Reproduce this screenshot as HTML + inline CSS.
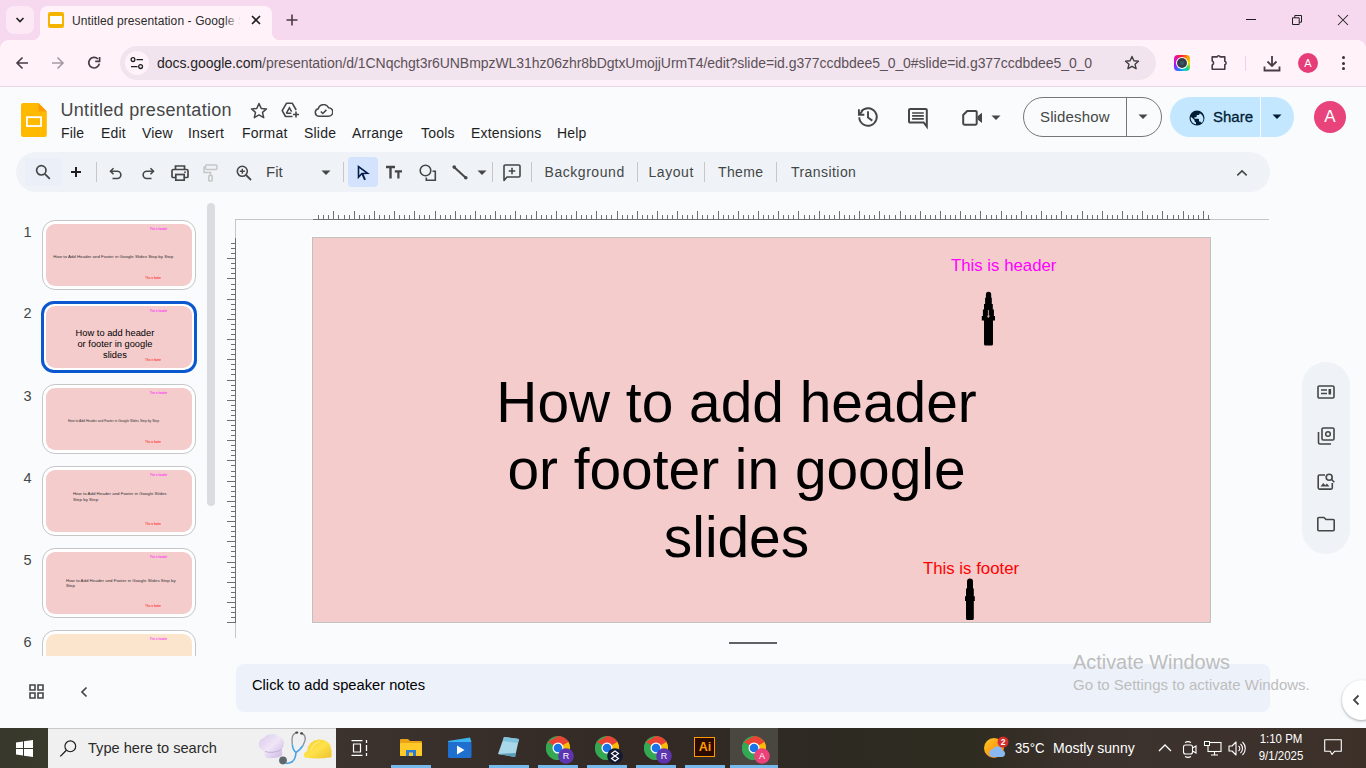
<!DOCTYPE html>
<html><head><meta charset="utf-8">
<style>
*{margin:0;padding:0;box-sizing:border-box}
html,body{width:1366px;height:768px;overflow:hidden;background:#F9FBFD;font-family:"Liberation Sans",sans-serif;position:relative}
.a{position:absolute}
#tabstrip{left:0;top:0;width:1366px;height:40px;background:#F7D9EF}
#toolbar{left:0;top:40px;width:1366px;height:46px;background:#FFF3F9}
#tbline{left:0;top:86px;width:1366px;height:1px;background:#EBD6E2}
#docs{left:0;top:87px;width:1366px;height:641px;background:#F9FBFD}
#taskbar{left:0;top:728px;width:1366px;height:40px;background:linear-gradient(90deg,#37372B 0px,#3A3A2C 48px,#3B322D 370px,#342A25 620px,#2D2A22 850px,#2E2B20 960px,#3A312C 1080px,#3C322E 1140px,#3D3029 1366px)}
svg{display:block}
</style></head><body>
<!-- Chrome tab strip -->
<div id="tabstrip" class="a"></div>
<div class="a" style="left:6px;top:6px;width:28px;height:28px;border-radius:8px;background:#FCE9F5"></div>
<svg class="a" style="left:15px;top:16px" width="10" height="8" viewBox="0 0 10 8"><path d="M1.5 2 L5 5.5 L8.5 2" stroke="#1F1F1F" stroke-width="1.6" fill="none"/></svg>
<div class="a" style="left:40px;top:6px;width:232px;height:40px;background:#FFF3F9;border-radius:8px 8px 0 0"></div>
<div class="a" style="left:32px;top:32px;width:8px;height:8px;background:radial-gradient(circle at 0 0,#F7D9EF 8px,#FFF3F9 8.5px)"></div>
<div class="a" style="left:272px;top:32px;width:8px;height:8px;background:radial-gradient(circle at 100% 0,#F7D9EF 8px,#FFF3F9 8.5px)"></div>
<!-- favicon -->
<div class="a" style="left:48px;top:12px;width:16px;height:16px;background:#F4B400;border-radius:2px"></div>
<div class="a" style="left:50px;top:16px;width:12px;height:8px;background:#fff"></div>
<div class="a" style="left:72px;top:13px;font-size:12px;line-height:16px;color:#2A2A2A;white-space:nowrap;width:172px;overflow:hidden;letter-spacing:0.1px">Untitled presentation - Google Slides</div>
<div class="a" style="left:224px;top:10px;width:22px;height:22px;background:linear-gradient(90deg,rgba(255,243,249,0),#FFF3F9 75%)"></div>
<svg class="a" style="left:251px;top:15px" width="10" height="10" viewBox="0 0 10 10"><path d="M1 1L9 9M9 1L1 9" stroke="#1F1F1F" stroke-width="1.6"/></svg>
<svg class="a" style="left:286px;top:14px" width="12" height="12" viewBox="0 0 12 12"><path d="M6 0.5V11.5M0.5 6H11.5" stroke="#4A3A45" stroke-width="1.6"/></svg>
<!-- window controls -->
<div class="a" style="left:1246px;top:19px;width:10px;height:1px;background:#1F1F1F"></div>
<svg class="a" style="left:1291px;top:14px" width="12" height="12" viewBox="0 0 12 12"><path d="M1.5 3.8h6.7v6.7H1.5z M3.8 3.8V1.5h6.7v6.7H8.2" stroke="#1F1F1F" stroke-width="1" fill="none"/></svg>
<svg class="a" style="left:1337px;top:14px" width="12" height="12" viewBox="0 0 12 12"><path d="M1 1L11 11M11 1L1 11" stroke="#1F1F1F" stroke-width="1.05"/></svg>

<!-- toolbar -->
<div id="toolbar" class="a"></div>
<div id="tbline" class="a"></div>
<div class="a" style="left:1358px;top:40px;width:8px;height:8px;background:radial-gradient(circle at 0 100%,#FFF3F9 7.5px,#F7D9EF 8px)"></div>
<div class="a" style="left:0;top:40px;width:8px;height:8px;background:radial-gradient(circle at 100% 100%,#FFF3F9 7.5px,#F7D9EF 8px)"></div>
<!-- nav -->
<svg class="a" style="left:15px;top:56px" width="14" height="14" viewBox="0 0 14 14"><path d="M13 7H2M7.5 1.5L2 7l5.5 5.5" stroke="#4A3A45" stroke-width="1.6" fill="none"/></svg>
<svg class="a" style="left:51px;top:56px" width="14" height="14" viewBox="0 0 14 14"><path d="M1 7H12M6.5 1.5L12 7l-5.5 5.5" stroke="#A898A3" stroke-width="1.6" fill="none"/></svg>
<svg class="a" style="left:86px;top:54px" width="16" height="16" viewBox="0 0 16 16"><path d="M13.3 9.6A5.3 5.3 0 1 1 11.9 5" stroke="#4A3A45" stroke-width="1.7" fill="none"/><path d="M9.2 7.4H13.6V3" stroke="#4A3A45" stroke-width="1.7" fill="none"/></svg>
<div class="a" style="left:120px;top:46px;width:1036px;height:34px;border-radius:17px;background:#F2E4EE"></div>
<div class="a" style="left:125px;top:51px;width:24px;height:24px;border-radius:12px;background:#FFF3F9"></div>
<svg class="a" style="left:130px;top:57px" width="14" height="13" viewBox="0 0 14 13"><circle cx="3" cy="2.6" r="1.9" stroke="#1F1F1F" stroke-width="1.3" fill="none"/><path d="M6.5 2.6H13M1 9.6H7.5" stroke="#1F1F1F" stroke-width="1.4"/><circle cx="10.6" cy="9.6" r="1.9" stroke="#1F1F1F" stroke-width="1.3" fill="none"/></svg>
<div class="a" style="left:157px;top:54px;font-size:14px;line-height:18px;color:#5B5158;white-space:nowrap;letter-spacing:-0.05px"><span style="color:#1F1F1F">docs.google.com</span>/presentation/d/1CNqchgt3r6UNBmpzWL31hz06zhr8bDgtxUmojjUrmT4/edit?slide=id.g377ccdbdee5_0_0#slide=id.g377ccdbdee5_0_0</div>
<svg class="a" style="left:1124px;top:55px" width="16" height="16" viewBox="0 0 16 16"><path d="M8 1.5l1.9 4.3 4.6.4-3.5 3 1.1 4.5L8 11.3l-4.1 2.4 1.1-4.5-3.5-3 4.6-.4z" stroke="#3F3F3F" stroke-width="1.4" fill="none" stroke-linejoin="round"/></svg>
<div class="a" style="left:1174px;top:55px;width:16px;height:16px;border-radius:4px;background:conic-gradient(from 0deg,#FF2020,#FF9900 45deg,#E8E000 90deg,#20D080 135deg,#10D0D0 160deg,#2080FF 200deg,#9020FF 250deg,#E010C0 300deg,#FF2020 360deg)"></div>
<div class="a" style="left:1176.2px;top:57.2px;width:11.6px;height:11.6px;border-radius:6px;background:#fff"></div>
<div class="a" style="left:1177.3px;top:58.3px;width:9.4px;height:9.4px;border-radius:5px;background:#353E48"></div>
<div class="a" style="left:1179.8px;top:60.8px;width:4.4px;height:4.4px;border-radius:3px;background:#3F5868"></div>
<svg class="a" style="left:1209px;top:52px" width="20" height="20" viewBox="0 0 20 20"><path d="M3.2 4.9H8A1.7 1.7 0 0 1 11.2 4.9H15.8V9.2A1.9 1.9 0 0 1 15.8 12.8V17.2H3.2V12.9A2 2 0 0 0 3.2 9.1Z" stroke="#4A3A45" stroke-width="1.6" fill="none" stroke-linejoin="round"/></svg>
<div class="a" style="left:1244.5px;top:56px;width:1.5px;height:15px;background:#F5CDEA"></div>
<svg class="a" style="left:1263px;top:55px" width="18" height="17" viewBox="0 0 18 17"><path d="M9 1V11M4.5 6.5L9 11l4.5-4.5M1.5 11.5v4h15v-4" stroke="#4A3A45" stroke-width="1.8" fill="none"/></svg>
<div class="a" style="left:1298px;top:53px;width:20px;height:20px;border-radius:10px;background:#E63C78;color:#fff;font-size:11px;line-height:20px;text-align:center">A</div>
<div class="a" style="left:1342px;top:56px;width:3.2px;height:3.2px;border-radius:2px;background:#3D2E38"></div>
<div class="a" style="left:1342px;top:61.5px;width:3.2px;height:3.2px;border-radius:2px;background:#3D2E38"></div>
<div class="a" style="left:1342px;top:67px;width:3.2px;height:3.2px;border-radius:2px;background:#3D2E38"></div>


<!-- Docs header -->
<svg class="a" style="left:21px;top:103px" width="26" height="34" viewBox="0 0 26 34"><path d="M2.3 0H17.5L25.8 8.5V31.7A2.3 2.3 0 0 1 23.5 34H2.3A2.3 2.3 0 0 1 0 31.7V2.3A2.3 2.3 0 0 1 2.3 0z" fill="#FFBA00"/><path d="M17.5 0L25.8 8.5H17.5z" fill="#FF9A00"/><rect x="5.9" y="14.2" width="14.1" height="8.8" fill="none" stroke="#fff" stroke-width="1.8"/></svg>
<div class="a" style="left:60.5px;top:99px;font-size:18px;line-height:22px;color:#474747;white-space:nowrap;letter-spacing:0.3px">Untitled presentation</div>
<svg class="a" style="left:250px;top:102px" width="18" height="17" viewBox="0 0 18 17"><path d="M9 1.5l2.2 4.9 5.3.5-4 3.5 1.2 5.2L9 12.9l-4.7 2.7 1.2-5.2-4-3.5 5.3-.5z" stroke="#444746" stroke-width="1.5" fill="none" stroke-linejoin="round"/></svg>
<svg class="a" style="left:281px;top:102px" width="19" height="16" viewBox="0 0 19 16"><path d="M11.5 14.5H4.5L1.2 8.7 5.6 1.2h5.6L15.2 8" stroke="#444746" stroke-width="1.6" fill="none" stroke-linejoin="round"/><path d="M5.3 11.3L8.4 5.8 10.6 9.6M5.3 11.3h5" stroke="#444746" stroke-width="1.5" fill="none"/><path d="M15 9.5v6M12 12.5h6" stroke="#444746" stroke-width="1.6"/></svg>
<svg class="a" style="left:314px;top:104px" width="19" height="13" viewBox="0 0 19 13"><path d="M4.8 12.2A3.8 3.8 0 0 1 4.3 4.7 5.5 5.5 0 0 1 14.6 3.8 4.2 4.2 0 0 1 14.5 12.2z" stroke="#444746" stroke-width="1.5" fill="none"/><path d="M6.8 7.5l2 2 3.6-3.6" stroke="#444746" stroke-width="1.5" fill="none"/></svg>
<div class="a" style="top:123px;font-size:14px;line-height:20px;color:#1F1F1F;white-space:nowrap;left:0;width:700px;height:20px;letter-spacing:0.2px">
<span class="a" style="left:61px">File</span><span class="a" style="left:101px">Edit</span><span class="a" style="left:142px">View</span><span class="a" style="left:188px">Insert</span><span class="a" style="left:242px">Format</span><span class="a" style="left:304px">Slide</span><span class="a" style="left:352px">Arrange</span><span class="a" style="left:421px">Tools</span><span class="a" style="left:471px">Extensions</span><span class="a" style="left:557px">Help</span>
</div>
<!-- right header icons -->
<svg class="a" style="left:854px;top:103px" width="28" height="28" viewBox="0 0 28 28"><path d="M7.2 8.5A8.75 8.75 0 1 1 5.25 14.3" stroke="#444746" stroke-width="1.9" fill="none"/><path d="M4.9 6.2V11.7H10.3M5.2 11.4L8.4 8.2" stroke="#444746" stroke-width="1.9" fill="none"/><path d="M14 8.3V14.6L18.3 17.6" stroke="#444746" stroke-width="1.9" fill="none"/></svg>
<svg class="a" style="left:906px;top:106px" width="24" height="24" viewBox="0 0 24 24"><path d="M4.1 2.9H19.7A1.1 1.1 0 0 1 20.8 4V20.6L17.6 16.5H4.1A1.1 1.1 0 0 1 3 15.4V4A1.1 1.1 0 0 1 4.1 2.9z" stroke="#444746" stroke-width="2" fill="none" stroke-linejoin="miter"/><path d="M6.1 7H17.8M6.1 9.9H17.8M6.1 12.9H17.8" stroke="#444746" stroke-width="1.6"/></svg>
<svg class="a" style="left:961px;top:109px" width="22" height="18" viewBox="0 0 22 18"><path d="M6.2 2H14.6A1.1 1.1 0 0 1 15.7 3.1V14.6A1.1 1.1 0 0 1 14.6 15.7H3.3A1.1 1.1 0 0 1 2.2 14.6V6z" stroke="#444746" stroke-width="2" fill="none" stroke-linejoin="miter"/><path d="M16.5 7.3L21 3.8V14L16.5 10.6z" fill="#444746"/></svg>
<svg class="a" style="left:991px;top:114.5px" width="10" height="6" viewBox="0 0 10 6"><path d="M0.5 0.5h9L5 5z" fill="#444746"/></svg>
<div class="a" style="left:1023px;top:97px;width:139px;height:40px;border:1px solid #747775;border-radius:20px"></div>
<div class="a" style="left:1126px;top:97px;width:1px;height:40px;background:#747775"></div>
<div class="a" style="left:1040px;top:107px;font-size:15px;line-height:20px;color:#444746;white-space:nowrap;letter-spacing:0.14px">Slideshow</div>
<svg class="a" style="left:1138px;top:114px" width="10" height="6" viewBox="0 0 10 6"><path d="M0.5 0.5h9L5 5z" fill="#444746"/></svg>
<div class="a" style="left:1170px;top:97px;width:124px;height:40px;background:#C2E7FF;border-radius:20px"></div>
<div class="a" style="left:1260px;top:97px;width:1px;height:40px;background:#F9FBFD"></div>
<svg class="a" style="left:1188.5px;top:109.5px" width="16" height="16" viewBox="0 0 16 16"><circle cx="8" cy="8" r="7.5" fill="#001D35"/><path d="M7 14.3c-3-.4-5.3-3-5.3-6.2 0-.5.1-.9.2-1.3L5.5 10v.8c0 .8.6 1.5 1.5 1.5zm5-1.8c-.2-.5-.7-.9-1.2-.9H10V9.5c0-.4-.3-.8-.8-.8H5.5V7.2H7c.4 0 .7-.3.7-.7V5h1.5c.8 0 1.5-.7 1.5-1.5v-.3c2.2.9 3.7 3 3.7 5.5 0 1.6-.6 3-1.6 4.1z" fill="#C2E7FF"/></svg>
<div class="a" style="left:1213px;top:107px;font-size:15px;line-height:20px;color:#001D35;white-space:nowrap;-webkit-text-stroke:0.3px #001D35">Share</div>
<svg class="a" style="left:1272px;top:114px" width="10" height="6" viewBox="0 0 10 6"><path d="M0.5 0.5h9L5 5z" fill="#001D35"/></svg>
<div class="a" style="left:1314px;top:101px;width:32px;height:32px;border-radius:16px;background:#E8437A;color:#fff;font-size:17px;line-height:32px;text-align:center">A</div>

<!-- Docs toolbar -->
<div class="a" style="left:16px;top:152px;width:1254px;height:40px;border-radius:20px;background:#EFF3F8"></div>
<div class="a" style="left:25px;top:158px;width:37px;height:28px;background:#EBF0F8"></div>
<svg class="a" style="left:35px;top:164px" width="16" height="16" viewBox="0 0 16 16"><circle cx="6.3" cy="6.3" r="4.7" stroke="#444746" stroke-width="1.7" fill="none"/><path d="M9.8 9.8l5 5" stroke="#444746" stroke-width="1.8"/></svg>
<svg class="a" style="left:70px;top:166px" width="12" height="12" viewBox="0 0 12 12"><path d="M6 1v10M1 6h10" stroke="#1F1F1F" stroke-width="2"/></svg>
<div class="a" style="left:96px;top:162px;width:1px;height:20px;background:#C7C7C7"></div>
<svg class="a" style="left:109px;top:167px" width="14" height="13" viewBox="0 0 14 13"><path d="M4.5 1.2L1.5 4.2l3 3" stroke="#444746" stroke-width="1.6" fill="none"/><path d="M1.8 4.2h6.4a3.6 3.6 0 0 1 0 7.3H3.5" stroke="#444746" stroke-width="1.6" fill="none"/></svg>
<svg class="a" style="left:141px;top:167px" width="14" height="13" viewBox="0 0 14 13"><path d="M9.5 1.2l3 3-3 3" stroke="#444746" stroke-width="1.6" fill="none"/><path d="M12.2 4.2H5.8a3.6 3.6 0 0 0 0 7.3h4.7" stroke="#444746" stroke-width="1.6" fill="none"/></svg>
<svg class="a" style="left:171px;top:165px" width="18" height="16" viewBox="0 0 18 16"><path d="M4.5 4.5V1h9v3.5" stroke="#444746" stroke-width="1.7" fill="none"/><path d="M4 12.5H2a1 1 0 0 1-1-1V6a1.5 1.5 0 0 1 1.5-1.5h13A1.5 1.5 0 0 1 17 6v5.5a1 1 0 0 1-1 1h-2" stroke="#444746" stroke-width="1.7" fill="none"/><rect x="4.8" y="9.5" width="8.4" height="5.7" stroke="#444746" stroke-width="1.7" fill="none"/><circle cx="14" cy="7.2" r=".9" fill="#444746"/></svg>
<svg class="a" style="left:203px;top:164px" width="16" height="18" viewBox="0 0 16 18"><rect x="2.5" y="1" width="11.5" height="4.5" rx="1" stroke="#C4C7C5" stroke-width="1.5" fill="none"/><path d="M2.5 3.3H1V8.5h6.5v3" stroke="#C4C7C5" stroke-width="1.5" fill="none"/><rect x="5.8" y="11.5" width="3.4" height="5.5" rx=".8" stroke="#C4C7C5" stroke-width="1.5" fill="none"/></svg>
<svg class="a" style="left:236px;top:165px" width="16" height="16" viewBox="0 0 16 16"><circle cx="6.3" cy="6.3" r="5" stroke="#444746" stroke-width="1.6" fill="none"/><path d="M10 10l5 5" stroke="#444746" stroke-width="1.8"/><path d="M6.3 3.8v5M3.8 6.3h5" stroke="#444746" stroke-width="1.4"/></svg>
<div class="a" style="left:266px;top:163px;font-size:15px;line-height:18px;color:#444746;white-space:nowrap">Fit</div>
<svg class="a" style="left:321px;top:170px" width="10" height="6" viewBox="0 0 10 6"><path d="M0.5 0.5h9L5 5z" fill="#444746"/></svg>
<div class="a" style="left:343px;top:162px;width:1px;height:20px;background:#C7C7C7"></div>
<div class="a" style="left:348px;top:157px;width:30px;height:30px;border-radius:4px;background:#D3E3FD"></div>
<svg class="a" style="left:355px;top:163px" width="16" height="20" viewBox="0 0 16 20"><path d="M3.5 3.6V14.2L6.9 10.5 12.6 10.3z" stroke="#041E49" stroke-width="1.6" fill="none" stroke-linejoin="miter"/><path d="M7.2 10.4L10 16.8" stroke="#041E49" stroke-width="2"/></svg>
<svg class="a" style="left:385px;top:165px" width="18" height="14" viewBox="0 0 18 14"><path d="M1 2h9M5.5 2v11.5" stroke="#444746" stroke-width="2.4"/><path d="M9.8 6.3h7.2M13.4 6.3v7.2" stroke="#444746" stroke-width="2.2"/></svg>
<svg class="a" style="left:419px;top:164px" width="18" height="18" viewBox="0 0 18 18"><circle cx="6.5" cy="6.5" r="5.3" stroke="#444746" stroke-width="1.6" fill="none"/><path d="M13.5 7.3h2.8v9H7.3v-2.8" stroke="#444746" stroke-width="1.6" fill="none"/></svg>
<svg class="a" style="left:452px;top:165px" width="16" height="15" viewBox="0 0 16 15"><path d="M2 2l12 11" stroke="#444746" stroke-width="2"/><circle cx="2.2" cy="2.1" r="1.8" fill="#444746"/><circle cx="13.8" cy="12.8" r="1.8" fill="#444746"/></svg>
<svg class="a" style="left:477px;top:170px" width="10" height="6" viewBox="0 0 10 6"><path d="M0.5 0.5h9L5 5z" fill="#444746"/></svg>
<div class="a" style="left:492px;top:162px;width:1px;height:20px;background:#C7C7C7"></div>
<svg class="a" style="left:503px;top:164px" width="18" height="18" viewBox="0 0 18 18"><path d="M2.2 1h13.6a1.2 1.2 0 0 1 1.2 1.2v9.6a1.2 1.2 0 0 1-1.2 1.2H4l-3 3.5V2.2A1.2 1.2 0 0 1 2.2 1z" stroke="#444746" stroke-width="1.6" fill="none" stroke-linejoin="round"/><path d="M9 3.7v6.6M5.7 7h6.6" stroke="#444746" stroke-width="1.6"/></svg>
<div class="a" style="left:531px;top:162px;width:1px;height:20px;background:#C7C7C7"></div>
<div class="a" style="left:544.5px;top:163px;font-size:14px;line-height:18px;color:#444746;white-space:nowrap;letter-spacing:0.55px">Background</div>
<div class="a" style="left:637px;top:162px;width:1px;height:20px;background:#C7C7C7"></div>
<div class="a" style="left:648.5px;top:163px;font-size:14px;line-height:18px;color:#444746;white-space:nowrap;letter-spacing:0.55px">Layout</div>
<div class="a" style="left:704px;top:162px;width:1px;height:20px;background:#C7C7C7"></div>
<div class="a" style="left:718px;top:163px;font-size:14px;line-height:18px;color:#444746;white-space:nowrap;letter-spacing:0.35px">Theme</div>
<div class="a" style="left:776px;top:162px;width:1px;height:20px;background:#C7C7C7"></div>
<div class="a" style="left:791px;top:163px;font-size:14px;line-height:18px;color:#444746;white-space:nowrap;letter-spacing:0.44px">Transition</div>
<svg class="a" style="left:1235px;top:169px" width="14" height="9" viewBox="0 0 14 9"><path d="M2.3 6.3L7 1.8l4.7 4.5" stroke="#444746" stroke-width="1.6" fill="none"/></svg>

<!-- rulers -->
<div class="a" style="left:235px;top:219px;width:1034px;height:1px;background:#C6C6C6"></div>
<div class="a" style="left:313px;top:219px;width:897px;height:1px;background:#6F6F6F"></div>
<div class="a" style="left:235px;top:219px;width:1px;height:419px;background:#C6C6C6"></div>
<div class="a" style="left:235px;top:238px;width:1px;height:385px;background:#6F6F6F"></div>
<div class="a" style="left:318.25px;top:215px;width:1px;height:4px;background:#6F6F6F"></div>
<div class="a" style="left:323.31px;top:215px;width:1px;height:4px;background:#6F6F6F"></div>
<div class="a" style="left:328.37px;top:215px;width:1px;height:4px;background:#6F6F6F"></div>
<div class="a" style="left:333.42px;top:211px;width:1px;height:8px;background:#6F6F6F"></div>
<div class="a" style="left:338.47px;top:215px;width:1px;height:4px;background:#6F6F6F"></div>
<div class="a" style="left:343.53px;top:215px;width:1px;height:4px;background:#6F6F6F"></div>
<div class="a" style="left:348.58px;top:215px;width:1px;height:4px;background:#6F6F6F"></div>
<div class="a" style="left:353.64px;top:211px;width:1px;height:8px;background:#6F6F6F"></div>
<div class="a" style="left:358.69px;top:215px;width:1px;height:4px;background:#6F6F6F"></div>
<div class="a" style="left:363.75px;top:215px;width:1px;height:4px;background:#6F6F6F"></div>
<div class="a" style="left:368.81px;top:215px;width:1px;height:4px;background:#6F6F6F"></div>
<div class="a" style="left:373.86px;top:211px;width:1px;height:8px;background:#6F6F6F"></div>
<div class="a" style="left:378.91px;top:215px;width:1px;height:4px;background:#6F6F6F"></div>
<div class="a" style="left:383.97px;top:215px;width:1px;height:4px;background:#6F6F6F"></div>
<div class="a" style="left:389.02px;top:215px;width:1px;height:4px;background:#6F6F6F"></div>
<div class="a" style="left:394.08px;top:211px;width:1px;height:8px;background:#6F6F6F"></div>
<div class="a" style="left:399.13px;top:215px;width:1px;height:4px;background:#6F6F6F"></div>
<div class="a" style="left:404.19px;top:215px;width:1px;height:4px;background:#6F6F6F"></div>
<div class="a" style="left:409.25px;top:215px;width:1px;height:4px;background:#6F6F6F"></div>
<div class="a" style="left:414.30px;top:211px;width:1px;height:8px;background:#6F6F6F"></div>
<div class="a" style="left:419.36px;top:215px;width:1px;height:4px;background:#6F6F6F"></div>
<div class="a" style="left:424.41px;top:215px;width:1px;height:4px;background:#6F6F6F"></div>
<div class="a" style="left:429.46px;top:215px;width:1px;height:4px;background:#6F6F6F"></div>
<div class="a" style="left:434.52px;top:211px;width:1px;height:8px;background:#6F6F6F"></div>
<div class="a" style="left:439.57px;top:215px;width:1px;height:4px;background:#6F6F6F"></div>
<div class="a" style="left:444.63px;top:215px;width:1px;height:4px;background:#6F6F6F"></div>
<div class="a" style="left:449.68px;top:215px;width:1px;height:4px;background:#6F6F6F"></div>
<div class="a" style="left:454.74px;top:211px;width:1px;height:8px;background:#6F6F6F"></div>
<div class="a" style="left:459.79px;top:215px;width:1px;height:4px;background:#6F6F6F"></div>
<div class="a" style="left:464.85px;top:215px;width:1px;height:4px;background:#6F6F6F"></div>
<div class="a" style="left:469.90px;top:215px;width:1px;height:4px;background:#6F6F6F"></div>
<div class="a" style="left:474.96px;top:211px;width:1px;height:8px;background:#6F6F6F"></div>
<div class="a" style="left:480.01px;top:215px;width:1px;height:4px;background:#6F6F6F"></div>
<div class="a" style="left:485.07px;top:215px;width:1px;height:4px;background:#6F6F6F"></div>
<div class="a" style="left:490.12px;top:215px;width:1px;height:4px;background:#6F6F6F"></div>
<div class="a" style="left:495.18px;top:211px;width:1px;height:8px;background:#6F6F6F"></div>
<div class="a" style="left:500.24px;top:215px;width:1px;height:4px;background:#6F6F6F"></div>
<div class="a" style="left:505.29px;top:215px;width:1px;height:4px;background:#6F6F6F"></div>
<div class="a" style="left:510.34px;top:215px;width:1px;height:4px;background:#6F6F6F"></div>
<div class="a" style="left:515.40px;top:211px;width:1px;height:8px;background:#6F6F6F"></div>
<div class="a" style="left:520.45px;top:215px;width:1px;height:4px;background:#6F6F6F"></div>
<div class="a" style="left:525.51px;top:215px;width:1px;height:4px;background:#6F6F6F"></div>
<div class="a" style="left:530.56px;top:215px;width:1px;height:4px;background:#6F6F6F"></div>
<div class="a" style="left:535.62px;top:211px;width:1px;height:8px;background:#6F6F6F"></div>
<div class="a" style="left:540.67px;top:215px;width:1px;height:4px;background:#6F6F6F"></div>
<div class="a" style="left:545.73px;top:215px;width:1px;height:4px;background:#6F6F6F"></div>
<div class="a" style="left:550.78px;top:215px;width:1px;height:4px;background:#6F6F6F"></div>
<div class="a" style="left:555.84px;top:211px;width:1px;height:8px;background:#6F6F6F"></div>
<div class="a" style="left:560.89px;top:215px;width:1px;height:4px;background:#6F6F6F"></div>
<div class="a" style="left:565.95px;top:215px;width:1px;height:4px;background:#6F6F6F"></div>
<div class="a" style="left:571.00px;top:215px;width:1px;height:4px;background:#6F6F6F"></div>
<div class="a" style="left:576.06px;top:211px;width:1px;height:8px;background:#6F6F6F"></div>
<div class="a" style="left:581.12px;top:215px;width:1px;height:4px;background:#6F6F6F"></div>
<div class="a" style="left:586.17px;top:215px;width:1px;height:4px;background:#6F6F6F"></div>
<div class="a" style="left:591.22px;top:215px;width:1px;height:4px;background:#6F6F6F"></div>
<div class="a" style="left:596.28px;top:211px;width:1px;height:8px;background:#6F6F6F"></div>
<div class="a" style="left:601.34px;top:215px;width:1px;height:4px;background:#6F6F6F"></div>
<div class="a" style="left:606.39px;top:215px;width:1px;height:4px;background:#6F6F6F"></div>
<div class="a" style="left:611.44px;top:215px;width:1px;height:4px;background:#6F6F6F"></div>
<div class="a" style="left:616.50px;top:211px;width:1px;height:8px;background:#6F6F6F"></div>
<div class="a" style="left:621.55px;top:215px;width:1px;height:4px;background:#6F6F6F"></div>
<div class="a" style="left:626.61px;top:215px;width:1px;height:4px;background:#6F6F6F"></div>
<div class="a" style="left:631.66px;top:215px;width:1px;height:4px;background:#6F6F6F"></div>
<div class="a" style="left:636.72px;top:211px;width:1px;height:8px;background:#6F6F6F"></div>
<div class="a" style="left:641.77px;top:215px;width:1px;height:4px;background:#6F6F6F"></div>
<div class="a" style="left:646.83px;top:215px;width:1px;height:4px;background:#6F6F6F"></div>
<div class="a" style="left:651.88px;top:215px;width:1px;height:4px;background:#6F6F6F"></div>
<div class="a" style="left:656.94px;top:211px;width:1px;height:8px;background:#6F6F6F"></div>
<div class="a" style="left:661.99px;top:215px;width:1px;height:4px;background:#6F6F6F"></div>
<div class="a" style="left:667.05px;top:215px;width:1px;height:4px;background:#6F6F6F"></div>
<div class="a" style="left:672.11px;top:215px;width:1px;height:4px;background:#6F6F6F"></div>
<div class="a" style="left:677.16px;top:211px;width:1px;height:8px;background:#6F6F6F"></div>
<div class="a" style="left:682.21px;top:215px;width:1px;height:4px;background:#6F6F6F"></div>
<div class="a" style="left:687.27px;top:215px;width:1px;height:4px;background:#6F6F6F"></div>
<div class="a" style="left:692.33px;top:215px;width:1px;height:4px;background:#6F6F6F"></div>
<div class="a" style="left:697.38px;top:211px;width:1px;height:8px;background:#6F6F6F"></div>
<div class="a" style="left:702.43px;top:215px;width:1px;height:4px;background:#6F6F6F"></div>
<div class="a" style="left:707.49px;top:215px;width:1px;height:4px;background:#6F6F6F"></div>
<div class="a" style="left:712.54px;top:215px;width:1px;height:4px;background:#6F6F6F"></div>
<div class="a" style="left:717.60px;top:211px;width:1px;height:8px;background:#6F6F6F"></div>
<div class="a" style="left:722.65px;top:215px;width:1px;height:4px;background:#6F6F6F"></div>
<div class="a" style="left:727.71px;top:215px;width:1px;height:4px;background:#6F6F6F"></div>
<div class="a" style="left:732.76px;top:215px;width:1px;height:4px;background:#6F6F6F"></div>
<div class="a" style="left:737.82px;top:211px;width:1px;height:8px;background:#6F6F6F"></div>
<div class="a" style="left:742.88px;top:215px;width:1px;height:4px;background:#6F6F6F"></div>
<div class="a" style="left:747.93px;top:215px;width:1px;height:4px;background:#6F6F6F"></div>
<div class="a" style="left:752.98px;top:215px;width:1px;height:4px;background:#6F6F6F"></div>
<div class="a" style="left:758.04px;top:211px;width:1px;height:8px;background:#6F6F6F"></div>
<div class="a" style="left:763.10px;top:215px;width:1px;height:4px;background:#6F6F6F"></div>
<div class="a" style="left:768.15px;top:215px;width:1px;height:4px;background:#6F6F6F"></div>
<div class="a" style="left:773.20px;top:215px;width:1px;height:4px;background:#6F6F6F"></div>
<div class="a" style="left:778.26px;top:211px;width:1px;height:8px;background:#6F6F6F"></div>
<div class="a" style="left:783.31px;top:215px;width:1px;height:4px;background:#6F6F6F"></div>
<div class="a" style="left:788.37px;top:215px;width:1px;height:4px;background:#6F6F6F"></div>
<div class="a" style="left:793.42px;top:215px;width:1px;height:4px;background:#6F6F6F"></div>
<div class="a" style="left:798.48px;top:211px;width:1px;height:8px;background:#6F6F6F"></div>
<div class="a" style="left:803.53px;top:215px;width:1px;height:4px;background:#6F6F6F"></div>
<div class="a" style="left:808.59px;top:215px;width:1px;height:4px;background:#6F6F6F"></div>
<div class="a" style="left:813.64px;top:215px;width:1px;height:4px;background:#6F6F6F"></div>
<div class="a" style="left:818.70px;top:211px;width:1px;height:8px;background:#6F6F6F"></div>
<div class="a" style="left:823.75px;top:215px;width:1px;height:4px;background:#6F6F6F"></div>
<div class="a" style="left:828.81px;top:215px;width:1px;height:4px;background:#6F6F6F"></div>
<div class="a" style="left:833.87px;top:215px;width:1px;height:4px;background:#6F6F6F"></div>
<div class="a" style="left:838.92px;top:211px;width:1px;height:8px;background:#6F6F6F"></div>
<div class="a" style="left:843.97px;top:215px;width:1px;height:4px;background:#6F6F6F"></div>
<div class="a" style="left:849.03px;top:215px;width:1px;height:4px;background:#6F6F6F"></div>
<div class="a" style="left:854.09px;top:215px;width:1px;height:4px;background:#6F6F6F"></div>
<div class="a" style="left:859.14px;top:211px;width:1px;height:8px;background:#6F6F6F"></div>
<div class="a" style="left:864.19px;top:215px;width:1px;height:4px;background:#6F6F6F"></div>
<div class="a" style="left:869.25px;top:215px;width:1px;height:4px;background:#6F6F6F"></div>
<div class="a" style="left:874.31px;top:215px;width:1px;height:4px;background:#6F6F6F"></div>
<div class="a" style="left:879.36px;top:211px;width:1px;height:8px;background:#6F6F6F"></div>
<div class="a" style="left:884.41px;top:215px;width:1px;height:4px;background:#6F6F6F"></div>
<div class="a" style="left:889.47px;top:215px;width:1px;height:4px;background:#6F6F6F"></div>
<div class="a" style="left:894.52px;top:215px;width:1px;height:4px;background:#6F6F6F"></div>
<div class="a" style="left:899.58px;top:211px;width:1px;height:8px;background:#6F6F6F"></div>
<div class="a" style="left:904.63px;top:215px;width:1px;height:4px;background:#6F6F6F"></div>
<div class="a" style="left:909.69px;top:215px;width:1px;height:4px;background:#6F6F6F"></div>
<div class="a" style="left:914.74px;top:215px;width:1px;height:4px;background:#6F6F6F"></div>
<div class="a" style="left:919.80px;top:211px;width:1px;height:8px;background:#6F6F6F"></div>
<div class="a" style="left:924.86px;top:215px;width:1px;height:4px;background:#6F6F6F"></div>
<div class="a" style="left:929.91px;top:215px;width:1px;height:4px;background:#6F6F6F"></div>
<div class="a" style="left:934.96px;top:215px;width:1px;height:4px;background:#6F6F6F"></div>
<div class="a" style="left:940.02px;top:211px;width:1px;height:8px;background:#6F6F6F"></div>
<div class="a" style="left:945.08px;top:215px;width:1px;height:4px;background:#6F6F6F"></div>
<div class="a" style="left:950.13px;top:215px;width:1px;height:4px;background:#6F6F6F"></div>
<div class="a" style="left:955.18px;top:215px;width:1px;height:4px;background:#6F6F6F"></div>
<div class="a" style="left:960.24px;top:211px;width:1px;height:8px;background:#6F6F6F"></div>
<div class="a" style="left:965.29px;top:215px;width:1px;height:4px;background:#6F6F6F"></div>
<div class="a" style="left:970.35px;top:215px;width:1px;height:4px;background:#6F6F6F"></div>
<div class="a" style="left:975.40px;top:215px;width:1px;height:4px;background:#6F6F6F"></div>
<div class="a" style="left:980.46px;top:211px;width:1px;height:8px;background:#6F6F6F"></div>
<div class="a" style="left:985.51px;top:215px;width:1px;height:4px;background:#6F6F6F"></div>
<div class="a" style="left:990.57px;top:215px;width:1px;height:4px;background:#6F6F6F"></div>
<div class="a" style="left:995.62px;top:215px;width:1px;height:4px;background:#6F6F6F"></div>
<div class="a" style="left:1000.68px;top:211px;width:1px;height:8px;background:#6F6F6F"></div>
<div class="a" style="left:1005.73px;top:215px;width:1px;height:4px;background:#6F6F6F"></div>
<div class="a" style="left:1010.79px;top:215px;width:1px;height:4px;background:#6F6F6F"></div>
<div class="a" style="left:1015.85px;top:215px;width:1px;height:4px;background:#6F6F6F"></div>
<div class="a" style="left:1020.90px;top:211px;width:1px;height:8px;background:#6F6F6F"></div>
<div class="a" style="left:1025.95px;top:215px;width:1px;height:4px;background:#6F6F6F"></div>
<div class="a" style="left:1031.01px;top:215px;width:1px;height:4px;background:#6F6F6F"></div>
<div class="a" style="left:1036.07px;top:215px;width:1px;height:4px;background:#6F6F6F"></div>
<div class="a" style="left:1041.12px;top:211px;width:1px;height:8px;background:#6F6F6F"></div>
<div class="a" style="left:1046.17px;top:215px;width:1px;height:4px;background:#6F6F6F"></div>
<div class="a" style="left:1051.23px;top:215px;width:1px;height:4px;background:#6F6F6F"></div>
<div class="a" style="left:1056.28px;top:215px;width:1px;height:4px;background:#6F6F6F"></div>
<div class="a" style="left:1061.34px;top:211px;width:1px;height:8px;background:#6F6F6F"></div>
<div class="a" style="left:1066.39px;top:215px;width:1px;height:4px;background:#6F6F6F"></div>
<div class="a" style="left:1071.45px;top:215px;width:1px;height:4px;background:#6F6F6F"></div>
<div class="a" style="left:1076.50px;top:215px;width:1px;height:4px;background:#6F6F6F"></div>
<div class="a" style="left:1081.56px;top:211px;width:1px;height:8px;background:#6F6F6F"></div>
<div class="a" style="left:1086.62px;top:215px;width:1px;height:4px;background:#6F6F6F"></div>
<div class="a" style="left:1091.67px;top:215px;width:1px;height:4px;background:#6F6F6F"></div>
<div class="a" style="left:1096.72px;top:215px;width:1px;height:4px;background:#6F6F6F"></div>
<div class="a" style="left:1101.78px;top:211px;width:1px;height:8px;background:#6F6F6F"></div>
<div class="a" style="left:1106.84px;top:215px;width:1px;height:4px;background:#6F6F6F"></div>
<div class="a" style="left:1111.89px;top:215px;width:1px;height:4px;background:#6F6F6F"></div>
<div class="a" style="left:1116.94px;top:215px;width:1px;height:4px;background:#6F6F6F"></div>
<div class="a" style="left:1122.00px;top:211px;width:1px;height:8px;background:#6F6F6F"></div>
<div class="a" style="left:1127.05px;top:215px;width:1px;height:4px;background:#6F6F6F"></div>
<div class="a" style="left:1132.11px;top:215px;width:1px;height:4px;background:#6F6F6F"></div>
<div class="a" style="left:1137.16px;top:215px;width:1px;height:4px;background:#6F6F6F"></div>
<div class="a" style="left:1142.22px;top:211px;width:1px;height:8px;background:#6F6F6F"></div>
<div class="a" style="left:1147.27px;top:215px;width:1px;height:4px;background:#6F6F6F"></div>
<div class="a" style="left:1152.33px;top:215px;width:1px;height:4px;background:#6F6F6F"></div>
<div class="a" style="left:1157.38px;top:215px;width:1px;height:4px;background:#6F6F6F"></div>
<div class="a" style="left:1162.44px;top:211px;width:1px;height:8px;background:#6F6F6F"></div>
<div class="a" style="left:1167.49px;top:215px;width:1px;height:4px;background:#6F6F6F"></div>
<div class="a" style="left:1172.55px;top:215px;width:1px;height:4px;background:#6F6F6F"></div>
<div class="a" style="left:1177.61px;top:215px;width:1px;height:4px;background:#6F6F6F"></div>
<div class="a" style="left:1182.66px;top:211px;width:1px;height:8px;background:#6F6F6F"></div>
<div class="a" style="left:1187.71px;top:215px;width:1px;height:4px;background:#6F6F6F"></div>
<div class="a" style="left:1192.77px;top:215px;width:1px;height:4px;background:#6F6F6F"></div>
<div class="a" style="left:1197.83px;top:215px;width:1px;height:4px;background:#6F6F6F"></div>
<div class="a" style="left:1202.88px;top:211px;width:1px;height:8px;background:#6F6F6F"></div>
<div class="a" style="left:1207.93px;top:215px;width:1px;height:4px;background:#6F6F6F"></div>
<div class="a" style="left:231px;top:243.06px;width:4px;height:1px;background:#6F6F6F"></div>
<div class="a" style="left:231px;top:248.11px;width:4px;height:1px;background:#6F6F6F"></div>
<div class="a" style="left:231px;top:253.16px;width:4px;height:1px;background:#6F6F6F"></div>
<div class="a" style="left:227px;top:258.22px;width:8px;height:1px;background:#6F6F6F"></div>
<div class="a" style="left:231px;top:263.27px;width:4px;height:1px;background:#6F6F6F"></div>
<div class="a" style="left:231px;top:268.33px;width:4px;height:1px;background:#6F6F6F"></div>
<div class="a" style="left:231px;top:273.38px;width:4px;height:1px;background:#6F6F6F"></div>
<div class="a" style="left:227px;top:278.44px;width:8px;height:1px;background:#6F6F6F"></div>
<div class="a" style="left:231px;top:283.50px;width:4px;height:1px;background:#6F6F6F"></div>
<div class="a" style="left:231px;top:288.55px;width:4px;height:1px;background:#6F6F6F"></div>
<div class="a" style="left:231px;top:293.61px;width:4px;height:1px;background:#6F6F6F"></div>
<div class="a" style="left:227px;top:298.66px;width:8px;height:1px;background:#6F6F6F"></div>
<div class="a" style="left:231px;top:303.72px;width:4px;height:1px;background:#6F6F6F"></div>
<div class="a" style="left:231px;top:308.77px;width:4px;height:1px;background:#6F6F6F"></div>
<div class="a" style="left:231px;top:313.82px;width:4px;height:1px;background:#6F6F6F"></div>
<div class="a" style="left:227px;top:318.88px;width:8px;height:1px;background:#6F6F6F"></div>
<div class="a" style="left:231px;top:323.94px;width:4px;height:1px;background:#6F6F6F"></div>
<div class="a" style="left:231px;top:328.99px;width:4px;height:1px;background:#6F6F6F"></div>
<div class="a" style="left:231px;top:334.04px;width:4px;height:1px;background:#6F6F6F"></div>
<div class="a" style="left:227px;top:339.10px;width:8px;height:1px;background:#6F6F6F"></div>
<div class="a" style="left:231px;top:344.15px;width:4px;height:1px;background:#6F6F6F"></div>
<div class="a" style="left:231px;top:349.21px;width:4px;height:1px;background:#6F6F6F"></div>
<div class="a" style="left:231px;top:354.26px;width:4px;height:1px;background:#6F6F6F"></div>
<div class="a" style="left:227px;top:359.32px;width:8px;height:1px;background:#6F6F6F"></div>
<div class="a" style="left:231px;top:364.38px;width:4px;height:1px;background:#6F6F6F"></div>
<div class="a" style="left:231px;top:369.43px;width:4px;height:1px;background:#6F6F6F"></div>
<div class="a" style="left:231px;top:374.49px;width:4px;height:1px;background:#6F6F6F"></div>
<div class="a" style="left:227px;top:379.54px;width:8px;height:1px;background:#6F6F6F"></div>
<div class="a" style="left:231px;top:384.60px;width:4px;height:1px;background:#6F6F6F"></div>
<div class="a" style="left:231px;top:389.65px;width:4px;height:1px;background:#6F6F6F"></div>
<div class="a" style="left:231px;top:394.70px;width:4px;height:1px;background:#6F6F6F"></div>
<div class="a" style="left:227px;top:399.76px;width:8px;height:1px;background:#6F6F6F"></div>
<div class="a" style="left:231px;top:404.81px;width:4px;height:1px;background:#6F6F6F"></div>
<div class="a" style="left:231px;top:409.87px;width:4px;height:1px;background:#6F6F6F"></div>
<div class="a" style="left:231px;top:414.92px;width:4px;height:1px;background:#6F6F6F"></div>
<div class="a" style="left:227px;top:419.98px;width:8px;height:1px;background:#6F6F6F"></div>
<div class="a" style="left:231px;top:425.03px;width:4px;height:1px;background:#6F6F6F"></div>
<div class="a" style="left:231px;top:430.09px;width:4px;height:1px;background:#6F6F6F"></div>
<div class="a" style="left:231px;top:435.14px;width:4px;height:1px;background:#6F6F6F"></div>
<div class="a" style="left:227px;top:440.20px;width:8px;height:1px;background:#6F6F6F"></div>
<div class="a" style="left:231px;top:445.25px;width:4px;height:1px;background:#6F6F6F"></div>
<div class="a" style="left:231px;top:450.31px;width:4px;height:1px;background:#6F6F6F"></div>
<div class="a" style="left:231px;top:455.37px;width:4px;height:1px;background:#6F6F6F"></div>
<div class="a" style="left:227px;top:460.42px;width:8px;height:1px;background:#6F6F6F"></div>
<div class="a" style="left:231px;top:465.48px;width:4px;height:1px;background:#6F6F6F"></div>
<div class="a" style="left:231px;top:470.53px;width:4px;height:1px;background:#6F6F6F"></div>
<div class="a" style="left:231px;top:475.58px;width:4px;height:1px;background:#6F6F6F"></div>
<div class="a" style="left:227px;top:480.64px;width:8px;height:1px;background:#6F6F6F"></div>
<div class="a" style="left:231px;top:485.69px;width:4px;height:1px;background:#6F6F6F"></div>
<div class="a" style="left:231px;top:490.75px;width:4px;height:1px;background:#6F6F6F"></div>
<div class="a" style="left:231px;top:495.81px;width:4px;height:1px;background:#6F6F6F"></div>
<div class="a" style="left:227px;top:500.86px;width:8px;height:1px;background:#6F6F6F"></div>
<div class="a" style="left:231px;top:505.91px;width:4px;height:1px;background:#6F6F6F"></div>
<div class="a" style="left:231px;top:510.97px;width:4px;height:1px;background:#6F6F6F"></div>
<div class="a" style="left:231px;top:516.02px;width:4px;height:1px;background:#6F6F6F"></div>
<div class="a" style="left:227px;top:521.08px;width:8px;height:1px;background:#6F6F6F"></div>
<div class="a" style="left:231px;top:526.13px;width:4px;height:1px;background:#6F6F6F"></div>
<div class="a" style="left:231px;top:531.19px;width:4px;height:1px;background:#6F6F6F"></div>
<div class="a" style="left:231px;top:536.25px;width:4px;height:1px;background:#6F6F6F"></div>
<div class="a" style="left:227px;top:541.30px;width:8px;height:1px;background:#6F6F6F"></div>
<div class="a" style="left:231px;top:546.36px;width:4px;height:1px;background:#6F6F6F"></div>
<div class="a" style="left:231px;top:551.41px;width:4px;height:1px;background:#6F6F6F"></div>
<div class="a" style="left:231px;top:556.46px;width:4px;height:1px;background:#6F6F6F"></div>
<div class="a" style="left:227px;top:561.52px;width:8px;height:1px;background:#6F6F6F"></div>
<div class="a" style="left:231px;top:566.58px;width:4px;height:1px;background:#6F6F6F"></div>
<div class="a" style="left:231px;top:571.63px;width:4px;height:1px;background:#6F6F6F"></div>
<div class="a" style="left:231px;top:576.68px;width:4px;height:1px;background:#6F6F6F"></div>
<div class="a" style="left:227px;top:581.74px;width:8px;height:1px;background:#6F6F6F"></div>
<div class="a" style="left:231px;top:586.79px;width:4px;height:1px;background:#6F6F6F"></div>
<div class="a" style="left:231px;top:591.85px;width:4px;height:1px;background:#6F6F6F"></div>
<div class="a" style="left:231px;top:596.90px;width:4px;height:1px;background:#6F6F6F"></div>
<div class="a" style="left:227px;top:601.96px;width:8px;height:1px;background:#6F6F6F"></div>
<div class="a" style="left:231px;top:607.01px;width:4px;height:1px;background:#6F6F6F"></div>
<div class="a" style="left:231px;top:612.07px;width:4px;height:1px;background:#6F6F6F"></div>
<div class="a" style="left:231px;top:617.12px;width:4px;height:1px;background:#6F6F6F"></div>
<div class="a" style="left:227px;top:622.18px;width:8px;height:1px;background:#6F6F6F"></div>
<!-- slide -->
<div class="a" style="left:311px;top:236px;width:901px;height:388px;background:#fff"></div>
<div class="a" style="left:312px;top:237px;width:899px;height:386px;background:#F4CCCC;border:1px solid #BEC2C1"></div>
<div id="title" class="a" style="left:312px;top:368.9px;width:849px;font-size:56.85px;line-height:67.5px;color:#000;text-align:center">How to add header<br>or footer in google<br>slides</div>
<div id="hdr" class="a" style="left:951px;top:255.9px;font-size:16.8px;line-height:20px;color:#FF00FF;white-space:nowrap">This is header</div>
<div id="ftr" class="a" style="left:923px;top:559.1px;font-size:16.8px;line-height:20px;color:#FF0000;white-space:nowrap">This is footer</div>
<svg class="a" style="left:980px;top:290px" width="18" height="58" viewBox="0 0 18 58"><path d="M5.9 4.5A2.65 2.65 0 0 1 11.2 4.5V7.7H11.8V14H12.8V19.5H13.9V25.9H15V30.5H13V54Q13 55.5 11.5 55.5H5.5Q4 55.5 4 54V30.5H1.8V25.9H2.9V19.5H4V14H5.1V7.7H5.9Z" fill="#000"/><path d="M8.4 20V27.2M7.3 25.6L8.4 27.5 9.5 25.6" stroke="#F4CCCC" stroke-width=".8" fill="none"/></svg>
<svg class="a" style="left:960px;top:576px" width="20" height="46" viewBox="0 0 20 46"><path d="M7 5.6A3 3 0 0 1 13 5.6V12.4H13.8V20.2H14.8V24.9H13.8V42.5Q13.8 44 12.3 44H7.5Q6 44 6 42.5V24.9H5V20.2H6V12.4H7Z" fill="#000"/></svg>

<!-- filmstrip -->
<div class="a" style="left:0;top:205px;width:220px;height:451px;overflow:hidden">
<div class="a" style="left:0;top:-205px;width:220px;height:900px">
<div class="a" style="left:0px;top:224px;width:31.5px;text-align:right;font-size:14.5px;line-height:16px;color:#444746">1</div>
<div class="a" style="left:42px;top:220px;width:154px;height:70px;border:1px solid #C4C7C5;border-radius:13px;background:#fff"></div>
<div class="a" style="left:46px;top:224px;width:146px;height:62px;border-radius:9px;background:#F4CCCC;overflow:hidden">
<div class="a" style="left:0;top:0;width:899px;height:386px;transform:scale(0.1624);transform-origin:0 0"><div class="a" style="left:639px;top:19px;font-size:17px;line-height:20px;color:#FF00FF;white-space:nowrap">This is header</div><div class="a" style="left:611px;top:322px;font-size:17px;line-height:20px;color:#FF0000;white-space:nowrap">This is footer</div><div class="a" style="left:45px;top:183px;font-size:27px;line-height:34px;color:#333;white-space:nowrap">How to Add Header and Footer in Google Slides Step by Step</div></div></div><div class="a" style="left:0px;top:305px;width:31.5px;text-align:right;font-size:14.5px;line-height:16px;color:#444746">2</div>
<div class="a" style="left:41px;top:301px;width:156px;height:72px;border:3px solid #0B57D0;border-radius:13px;background:#fff"></div>
<div class="a" style="left:46px;top:306px;width:146px;height:62px;border-radius:9px;background:#F4CCCC;overflow:hidden">
<div class="a" style="left:0;top:0;width:899px;height:386px;transform:scale(0.1624);transform-origin:0 0"><div class="a" style="left:639px;top:19px;font-size:17px;line-height:20px;color:#FF00FF;white-space:nowrap">This is header</div><div class="a" style="left:611px;top:322px;font-size:17px;line-height:20px;color:#FF0000;white-space:nowrap">This is footer</div><div class="a" style="left:0;top:131px;width:849px;font-size:57.3px;line-height:67.5px;color:#000;text-align:center">How to add header<br>or footer in google<br>slides</div></div></div><div class="a" style="left:0px;top:388px;width:31.5px;text-align:right;font-size:14.5px;line-height:16px;color:#444746">3</div>
<div class="a" style="left:42px;top:384px;width:154px;height:70px;border:1px solid #C4C7C5;border-radius:13px;background:#fff"></div>
<div class="a" style="left:46px;top:388px;width:146px;height:62px;border-radius:9px;background:#F4CCCC;overflow:hidden">
<div class="a" style="left:0;top:0;width:899px;height:386px;transform:scale(0.1624);transform-origin:0 0"><div class="a" style="left:639px;top:19px;font-size:17px;line-height:20px;color:#FF00FF;white-space:nowrap">This is header</div><div class="a" style="left:611px;top:322px;font-size:17px;line-height:20px;color:#FF0000;white-space:nowrap">This is footer</div><div class="a" style="left:135px;top:192px;font-size:20.5px;line-height:26px;color:#333;white-space:nowrap">How to Add Header and Footer in Google Slides Step by Step</div></div></div><div class="a" style="left:0px;top:470px;width:31.5px;text-align:right;font-size:14.5px;line-height:16px;color:#444746">4</div>
<div class="a" style="left:42px;top:466px;width:154px;height:70px;border:1px solid #C4C7C5;border-radius:13px;background:#fff"></div>
<div class="a" style="left:46px;top:470px;width:146px;height:62px;border-radius:9px;background:#F4CCCC;overflow:hidden">
<div class="a" style="left:0;top:0;width:899px;height:386px;transform:scale(0.1624);transform-origin:0 0"><div class="a" style="left:639px;top:19px;font-size:17px;line-height:20px;color:#FF00FF;white-space:nowrap">This is header</div><div class="a" style="left:611px;top:322px;font-size:17px;line-height:20px;color:#FF0000;white-space:nowrap">This is footer</div><div class="a" style="left:166px;top:132px;font-size:27px;line-height:32px;color:#333;white-space:nowrap">How to Add Header and Footer in Google Slides<br>Step by Step</div></div></div><div class="a" style="left:0px;top:552px;width:31.5px;text-align:right;font-size:14.5px;line-height:16px;color:#444746">5</div>
<div class="a" style="left:42px;top:548px;width:154px;height:70px;border:1px solid #C4C7C5;border-radius:13px;background:#fff"></div>
<div class="a" style="left:46px;top:552px;width:146px;height:62px;border-radius:9px;background:#F4CCCC;overflow:hidden">
<div class="a" style="left:0;top:0;width:899px;height:386px;transform:scale(0.1624);transform-origin:0 0"><div class="a" style="left:639px;top:19px;font-size:17px;line-height:20px;color:#FF00FF;white-space:nowrap">This is header</div><div class="a" style="left:611px;top:322px;font-size:17px;line-height:20px;color:#FF0000;white-space:nowrap">This is footer</div><div class="a" style="left:123px;top:164px;font-size:27px;line-height:29px;color:#333;white-space:nowrap">How to Add Header and Footer in Google Slides Step by<br>Step</div></div></div><div class="a" style="left:0px;top:634px;width:31.5px;text-align:right;font-size:14.5px;line-height:16px;color:#444746">6</div>
<div class="a" style="left:42px;top:630px;width:154px;height:70px;border:1px solid #C4C7C5;border-radius:13px;background:#fff"></div>
<div class="a" style="left:46px;top:634px;width:146px;height:62px;border-radius:9px;background:#FCE5CD;overflow:hidden">
<div class="a" style="left:0;top:0;width:899px;height:386px;transform:scale(0.1624);transform-origin:0 0"><div class="a" style="left:639px;top:19px;font-size:17px;line-height:20px;color:#FF00FF;white-space:nowrap">This is header</div></div></div>
</div></div>
<div class="a" style="left:207px;top:203px;width:8px;height:303px;border-radius:4px;background:#DADCE0"></div>
<svg class="a" style="left:29px;top:684px" width="15" height="15" viewBox="0 0 15 15"><path d="M1 1h5v5H1zM9 1h5v5H9zM1 9h5v5H1zM9 9h5v5H9z" stroke="#444746" stroke-width="1.6" fill="none"/></svg>
<svg class="a" style="left:79px;top:686px" width="10" height="12" viewBox="0 0 10 12"><path d="M7.5 1.5L3 6l4.5 4.5" stroke="#444746" stroke-width="1.7" fill="none"/></svg>

<!-- notes etc -->
<div class="a" style="left:729px;top:642px;width:48px;height:2px;background:#5F6368"></div>
<div class="a" style="left:236px;top:664px;width:1034px;height:48px;border-radius:8px;background:#EDF2FA"></div>
<div id="notes" class="a" style="left:252px;top:676px;font-size:14.7px;line-height:18px;color:#000;white-space:nowrap">Click to add speaker notes</div>
<!-- side panel -->
<div class="a" style="left:1302px;top:362px;width:48px;height:192px;border-radius:24px;background:#EFF3F8"></div>
<svg class="a" style="left:1317px;top:385px" width="18" height="14" viewBox="0 0 18 14"><rect x="1" y="1" width="16" height="12" rx="1.3" stroke="#444746" stroke-width="1.6" fill="none"/><path d="M4 5h6M4 8.5h6" stroke="#444746" stroke-width="1.6"/><rect x="11.5" y="4" width="2.6" height="5.5" fill="#444746"/></svg>
<svg class="a" style="left:1317px;top:427px" width="18" height="18" viewBox="0 0 18 18"><rect x="5" y="1" width="12" height="12" rx="1.3" stroke="#444746" stroke-width="1.6" fill="none"/><circle cx="11" cy="7" r="2.3" stroke="#444746" stroke-width="1.5" fill="none"/><path d="M1.5 5v10.5A1.5 1.5 0 0 0 3 17h11" stroke="#444746" stroke-width="1.6" fill="none"/></svg>
<svg class="a" style="left:1317px;top:472px" width="18" height="18" viewBox="0 0 18 18"><path d="M8 3H2.5A1.3 1.3 0 0 0 1.2 4.3v11.5a1.3 1.3 0 0 0 1.3 1.3H14a1.3 1.3 0 0 0 1.3-1.3V11" stroke="#444746" stroke-width="1.6" fill="none"/><circle cx="12.2" cy="5.2" r="3" stroke="#444746" stroke-width="1.6" fill="none"/><path d="M14.3 7.3l3 3" stroke="#444746" stroke-width="1.6"/><path d="M3.5 14.5l2.8-3.5 2 2.3 1.5-1.8 2.7 3z" fill="#444746"/></svg>
<svg class="a" style="left:1317px;top:516px" width="18" height="16" viewBox="0 0 18 16"><path d="M1.8 1.5h5.2l2 2h7.2a1 1 0 0 1 1 1v9.3a1 1 0 0 1-1 1H1.8a1 1 0 0 1-1-1V2.5a1 1 0 0 1 1-1z" stroke="#444746" stroke-width="1.6" fill="none" stroke-linejoin="round"/></svg>
<!-- activate windows -->
<div class="a" style="left:1073px;top:650px;font-size:19.9px;line-height:24px;color:#BDBDBD;white-space:nowrap">Activate Windows</div>
<div class="a" style="left:1073px;top:676px;font-size:15px;line-height:18px;color:#BDBDBD;white-space:nowrap">Go to Settings to activate Windows.</div>
<!-- side toggle -->
<div class="a" style="left:1361px;top:728px;width:1px;height:40px;background:#8A807A"></div>
<div class="a" style="left:1342px;top:680px;width:40px;height:40px;border-radius:20px;background:#fff;box-shadow:0 1px 3px rgba(60,64,67,.3),0 1px 2px rgba(60,64,67,.15)"></div>
<svg class="a" style="left:1351px;top:694px" width="10" height="12" viewBox="0 0 10 12"><path d="M7.5 1.5L3 6l4.5 4.5" stroke="#444746" stroke-width="1.8" fill="none"/></svg>

<!-- taskbar -->
<div id="taskbar" class="a"></div>

<svg class="a" style="left:16px;top:740px" width="17" height="17" viewBox="0 0 17 17"><path d="M0 2.4L7 1.4V8H0zM8 1.2L17 0V8H8zM0 9H7V15.6L0 14.6zM8 9H17V17L8 15.8z" fill="#fff"/></svg>
<div class="a" style="left:48px;top:728px;width:288px;height:40px;background:#F0F0F0;border-top:1px solid #C8C8C8"></div>
<svg class="a" style="left:59px;top:739px" width="19" height="19" viewBox="0 0 19 19"><circle cx="11.3" cy="7.3" r="5.4" stroke="#1A1A1A" stroke-width="1.15" fill="none"/><path d="M7.4 11.3L1.3 17.4" stroke="#1A1A1A" stroke-width="1.3"/></svg>
<div class="a" style="left:88px;top:739px;font-size:14.6px;line-height:19px;color:#2B2B2B;white-space:nowrap">Type here to search</div>
<!-- search doodle -->
<svg class="a" style="left:250px;top:728px" width="90" height="40" viewBox="0 0 90 40">
<defs><linearGradient id="hat" x1="0" y1="0" x2="1" y2="1"><stop offset="0" stop-color="#D9C8EC"/><stop offset=".5" stop-color="#EFE6F7"/><stop offset="1" stop-color="#C9B2DF"/></linearGradient>
<linearGradient id="helm" x1="0" y1="0" x2="1" y2="1"><stop offset="0" stop-color="#F5CB25"/><stop offset=".5" stop-color="#FFE24A"/><stop offset="1" stop-color="#EDC02A"/></linearGradient></defs>
<path d="M15.5 29.5Q13.5 26 14.5 23Q9 21.5 8.8 16.5Q8.8 11 14 10Q16.5 6 21.5 6.5Q25.5 5 28.5 8.5Q34 9.5 34 15Q34 19 31.5 21.5Q33 25.5 31.5 28Q24 31.5 15.5 29.5z" fill="url(#hat)"/>
<path d="M15 23.5Q23 26 32 21.5" stroke="#C6AEDC" stroke-width="1" fill="none"/>
<path d="M46.5 4.8Q42 5.5 42 12L42.3 16.5" stroke="#8A8F96" stroke-width="1.3" fill="none"/>
<path d="M51.5 5.5Q56 6.5 55 12.5L53 17.5" stroke="#8A8F96" stroke-width="1.3" fill="none"/>
<path d="M42.3 16.5Q42.8 22 46 24.5M53 17.5Q50 22 46 24.5" stroke="#4BA3E3" stroke-width="1.6" fill="none"/>
<path d="M46 24.5Q45.5 31 42.5 33.5Q39.5 35.5 36 35.5" stroke="#4BA3E3" stroke-width="1.6" fill="none"/>
<ellipse cx="46.8" cy="4.6" rx="1.6" ry="1.1" fill="#444"/><ellipse cx="51.6" cy="5.4" rx="1.6" ry="1.1" fill="#444"/>
<circle cx="33" cy="32.5" r="3.9" fill="#5F666D"/>
<path d="M54 27Q54 24.5 57 23.5Q58 13 68.5 11.5Q80.5 11 81.5 22L81.5 27Q82.5 28.5 81 29.2Q68 31.5 56 29.8Q53.5 29.3 54 27z" fill="url(#helm)"/>
<path d="M61 23Q62 15.5 70 13.5" stroke="#FFEB7A" stroke-width="1.6" fill="none" opacity=".8"/>
</svg>
<!-- task view -->
<svg class="a" style="left:351px;top:740px" width="18" height="16" viewBox="0 0 18 16"><path d="M0.5 0.7h11M0.5 15.3h11M2.5 4h7v8h-7z" stroke="#fff" stroke-width="1.2" fill="none"/><path d="M15.5 0v3M15.5 5v6M15.5 13v3" stroke="#fff" stroke-width="1.3"/></svg>
<!-- explorer -->
<svg class="a" style="left:400px;top:738px" width="22" height="19" viewBox="0 0 22 19"><path d="M0 2a1 1 0 0 1 1-1h7l2 2h11a1 1 0 0 1 1 1v13a1 1 0 0 1-1 1H1a1 1 0 0 1-1-1z" fill="#E8A317"/><rect x="0" y="5" width="22" height="13" rx="1" fill="#FFCA28"/><path d="M6 18v-6h10v6h-3v-3.5H9V18z" fill="#2B7CD3"/></svg>
<div class="a" style="left:391px;top:765px;width:40px;height:3px;background:#76B9ED"></div>
<!-- media player -->
<svg class="a" style="left:447px;top:736px" width="26" height="23" viewBox="0 0 26 23"><path d="M1 5L23 1.5 24.5 6 2.5 9z" fill="#3BB4F0"/><rect x="1" y="6" width="23.5" height="16" rx="1.5" fill="#1E6FD0"/><path d="M10 9.5v9l7.5-4.5z" fill="#fff"/></svg>
<!-- notepad -->
<svg class="a" style="left:496px;top:736px" width="25" height="23" viewBox="0 0 25 23"><path d="M8 1L23 3 19 21 2 18z" fill="#A8D8EA"/><path d="M8 1L23 3 22 7 7 5z" fill="#7FC3DE"/><path d="M2 18L19 21 20 17z" fill="#5A9DB8"/></svg>
<div class="a" style="left:489px;top:765px;width:40px;height:3px;background:#76B9ED"></div>
<svg class="a" style="left:546px;top:736px" width="28" height="28" viewBox="0 0 28 28">
<defs><clipPath id="c558"><circle cx="12" cy="12" r="12"/></clipPath></defs>
<g clip-path="url(#c558)"><rect x="0" y="0" width="28" height="28" fill="#34A853"/>
<path d="M12 12L1.6 6 12 0 24 0 24 12z" fill="#EA4335"/><path d="M12 12L22.4 6 24 6 24 24 18 24z" fill="#FBBC04"/><path d="M12 12L1.6 6 0 6 0 24 6 24 12 24z" fill="#34A853"/></g>
<path d="M12 6.5H22.4" stroke="none"/>
<circle cx="12" cy="12" r="5.5" fill="#fff"/><circle cx="12" cy="12" r="4.3" fill="#1A73E8"/>
<circle cx="20" cy="20" r="7.8" fill="#5E35B1"/><text x="20" y="23.3" font-size="9" font-family="Liberation Sans" fill="#fff" text-anchor="middle">R</text>
</svg><div class="a" style="left:538px;top:765px;width:40px;height:3px;background:#76B9ED"></div><svg class="a" style="left:595px;top:736px" width="28" height="28" viewBox="0 0 28 28">
<defs><clipPath id="c607"><circle cx="12" cy="12" r="12"/></clipPath></defs>
<g clip-path="url(#c607)"><rect x="0" y="0" width="28" height="28" fill="#34A853"/>
<path d="M12 12L1.6 6 12 0 24 0 24 12z" fill="#EA4335"/><path d="M12 12L22.4 6 24 6 24 24 18 24z" fill="#FBBC04"/><path d="M12 12L1.6 6 0 6 0 24 6 24 12 24z" fill="#34A853"/></g>
<path d="M12 6.5H22.4" stroke="none"/>
<circle cx="12" cy="12" r="5.5" fill="#fff"/><circle cx="12" cy="12" r="4.3" fill="#1A73E8"/>
<circle cx="20" cy="20" r="7.8" fill="#141A33"/><path d="M16.5 17.5l3.5-2.5 3.5 2.5-3.5 2.5zM16.5 22.5l3.5-2.5 3.5 2.5-3.5 2.5z" stroke="#fff" stroke-width="1.1" fill="none"/>
</svg><div class="a" style="left:587px;top:765px;width:40px;height:3px;background:#76B9ED"></div><svg class="a" style="left:644px;top:736px" width="28" height="28" viewBox="0 0 28 28">
<defs><clipPath id="c656"><circle cx="12" cy="12" r="12"/></clipPath></defs>
<g clip-path="url(#c656)"><rect x="0" y="0" width="28" height="28" fill="#34A853"/>
<path d="M12 12L1.6 6 12 0 24 0 24 12z" fill="#EA4335"/><path d="M12 12L22.4 6 24 6 24 24 18 24z" fill="#FBBC04"/><path d="M12 12L1.6 6 0 6 0 24 6 24 12 24z" fill="#34A853"/></g>
<path d="M12 6.5H22.4" stroke="none"/>
<circle cx="12" cy="12" r="5.5" fill="#fff"/><circle cx="12" cy="12" r="4.3" fill="#1A73E8"/>
<circle cx="20" cy="20" r="7.8" fill="#5E35B1"/><text x="20" y="23.3" font-size="9" font-family="Liberation Sans" fill="#fff" text-anchor="middle">R</text>
</svg><div class="a" style="left:636px;top:765px;width:40px;height:3px;background:#76B9ED"></div><div class="a" style="left:694px;top:737px;width:21px;height:20px;background:#2B0A00;border:1.5px solid #FF9A00"></div>
<div class="a" style="left:696px;top:739px;width:18px;font-size:12.5px;line-height:16px;color:#FF9A00;text-align:center;font-weight:bold">Ai</div>
<div class="a" style="left:685px;top:765px;width:40px;height:3px;background:#76B9ED"></div>
<div class="a" style="left:730px;top:728px;width:48px;height:40px;background:#4A4741"></div>
<svg class="a" style="left:742px;top:736px" width="28" height="28" viewBox="0 0 28 28">
<defs><clipPath id="c754"><circle cx="12" cy="12" r="12"/></clipPath></defs>
<g clip-path="url(#c754)"><rect x="0" y="0" width="28" height="28" fill="#34A853"/>
<path d="M12 12L1.6 6 12 0 24 0 24 12z" fill="#EA4335"/><path d="M12 12L22.4 6 24 6 24 24 18 24z" fill="#FBBC04"/><path d="M12 12L1.6 6 0 6 0 24 6 24 12 24z" fill="#34A853"/></g>
<path d="M12 6.5H22.4" stroke="none"/>
<circle cx="12" cy="12" r="5.5" fill="#fff"/><circle cx="12" cy="12" r="4.3" fill="#1A73E8"/>
<circle cx="20" cy="20" r="7.8" fill="#EC407A"/><text x="20" y="23.3" font-size="9" font-family="Liberation Sans" fill="#fff" text-anchor="middle">A</text>
</svg><div class="a" style="left:730px;top:765px;width:48px;height:3px;background:#76B9ED"></div>
<!-- tray -->
<svg class="a" style="left:983px;top:736px" width="26" height="23" viewBox="0 0 26 23"><defs><linearGradient id="sun" x1="0" y1="0" x2="1" y2="1"><stop offset="0" stop-color="#FFC928"/><stop offset="1" stop-color="#FF7A00"/></linearGradient></defs><circle cx="11" cy="12" r="10" fill="url(#sun)"/><path d="M9 21a4 4 0 0 1 1-7.8 5 5 0 0 1 9.5 1A3.5 3.5 0 0 1 19.5 21z" fill="#8AB8F0"/><circle cx="20" cy="6" r="5.5" fill="#D32F2F"/><text x="20" y="9.3" font-size="8.5" font-weight="bold" font-family="Liberation Sans" fill="#fff" text-anchor="middle">2</text></svg>
<div class="a" style="left:1015px;top:739px;font-size:14px;line-height:19px;color:#fff;white-space:nowrap;transform:scaleX(.94);transform-origin:0 0">35°C</div>
<div class="a" style="left:1053px;top:739px;font-size:14px;line-height:19px;color:#fff;white-space:nowrap">Mostly sunny</div>
<svg class="a" style="left:1158px;top:743px" width="14" height="9" viewBox="0 0 14 9"><path d="M1 8L7 2l6 6" stroke="#fff" stroke-width="1.3" fill="none"/></svg>
<svg class="a" style="left:1182px;top:740px" width="15" height="19" viewBox="0 0 15 19"><rect x="1.5" y="5" width="9" height="9" rx="2" stroke="#fff" stroke-width="1.1" fill="none"/><path d="M10.5 8l3.5-2v7l-3.5-2" stroke="#fff" stroke-width="1.1" fill="none"/><path d="M3 2.5a6 6 0 0 1 6 0M3 16.5a6 6 0 0 0 6 0" stroke="#fff" stroke-width="1.1" fill="none"/></svg>
<svg class="a" style="left:1204px;top:741px" width="18" height="15" viewBox="0 0 18 15"><rect x="4" y="1.5" width="13" height="9" stroke="#fff" stroke-width="1.1" fill="none"/><path d="M10.5 10.5v3M7 14h7" stroke="#fff" stroke-width="1.1"/><rect x="0.5" y="0.5" width="5" height="4" fill="#2E2B22" stroke="#fff" stroke-width="1"/></svg>
<svg class="a" style="left:1228px;top:740px" width="18" height="17" viewBox="0 0 18 17"><path d="M1 6h3l4-4v13l-4-4H1z" stroke="#fff" stroke-width="1.1" fill="none" stroke-linejoin="round"/><path d="M10.5 6a3 3 0 0 1 0 5M12.5 4a6 6 0 0 1 0 9M14.5 2a9 9 0 0 1 0 13" stroke="#fff" stroke-width="1.1" fill="none"/></svg>
<div class="a" style="left:1241px;top:730.4px;width:80px;text-align:center;font-size:13px;line-height:17px;color:#fff;white-space:nowrap;transform:scaleX(.88);transform-origin:40px 0">1:10 PM<br>9/1/2025</div>
<svg class="a" style="left:1324px;top:739px" width="18" height="17" viewBox="0 0 18 17"><path d="M0.7 0.7h16.6v11.6H10.5L8 15.5 6.3 12.3H0.7z" stroke="#fff" stroke-width="1.1" fill="none" stroke-linejoin="round"/></svg>
</body></html>
